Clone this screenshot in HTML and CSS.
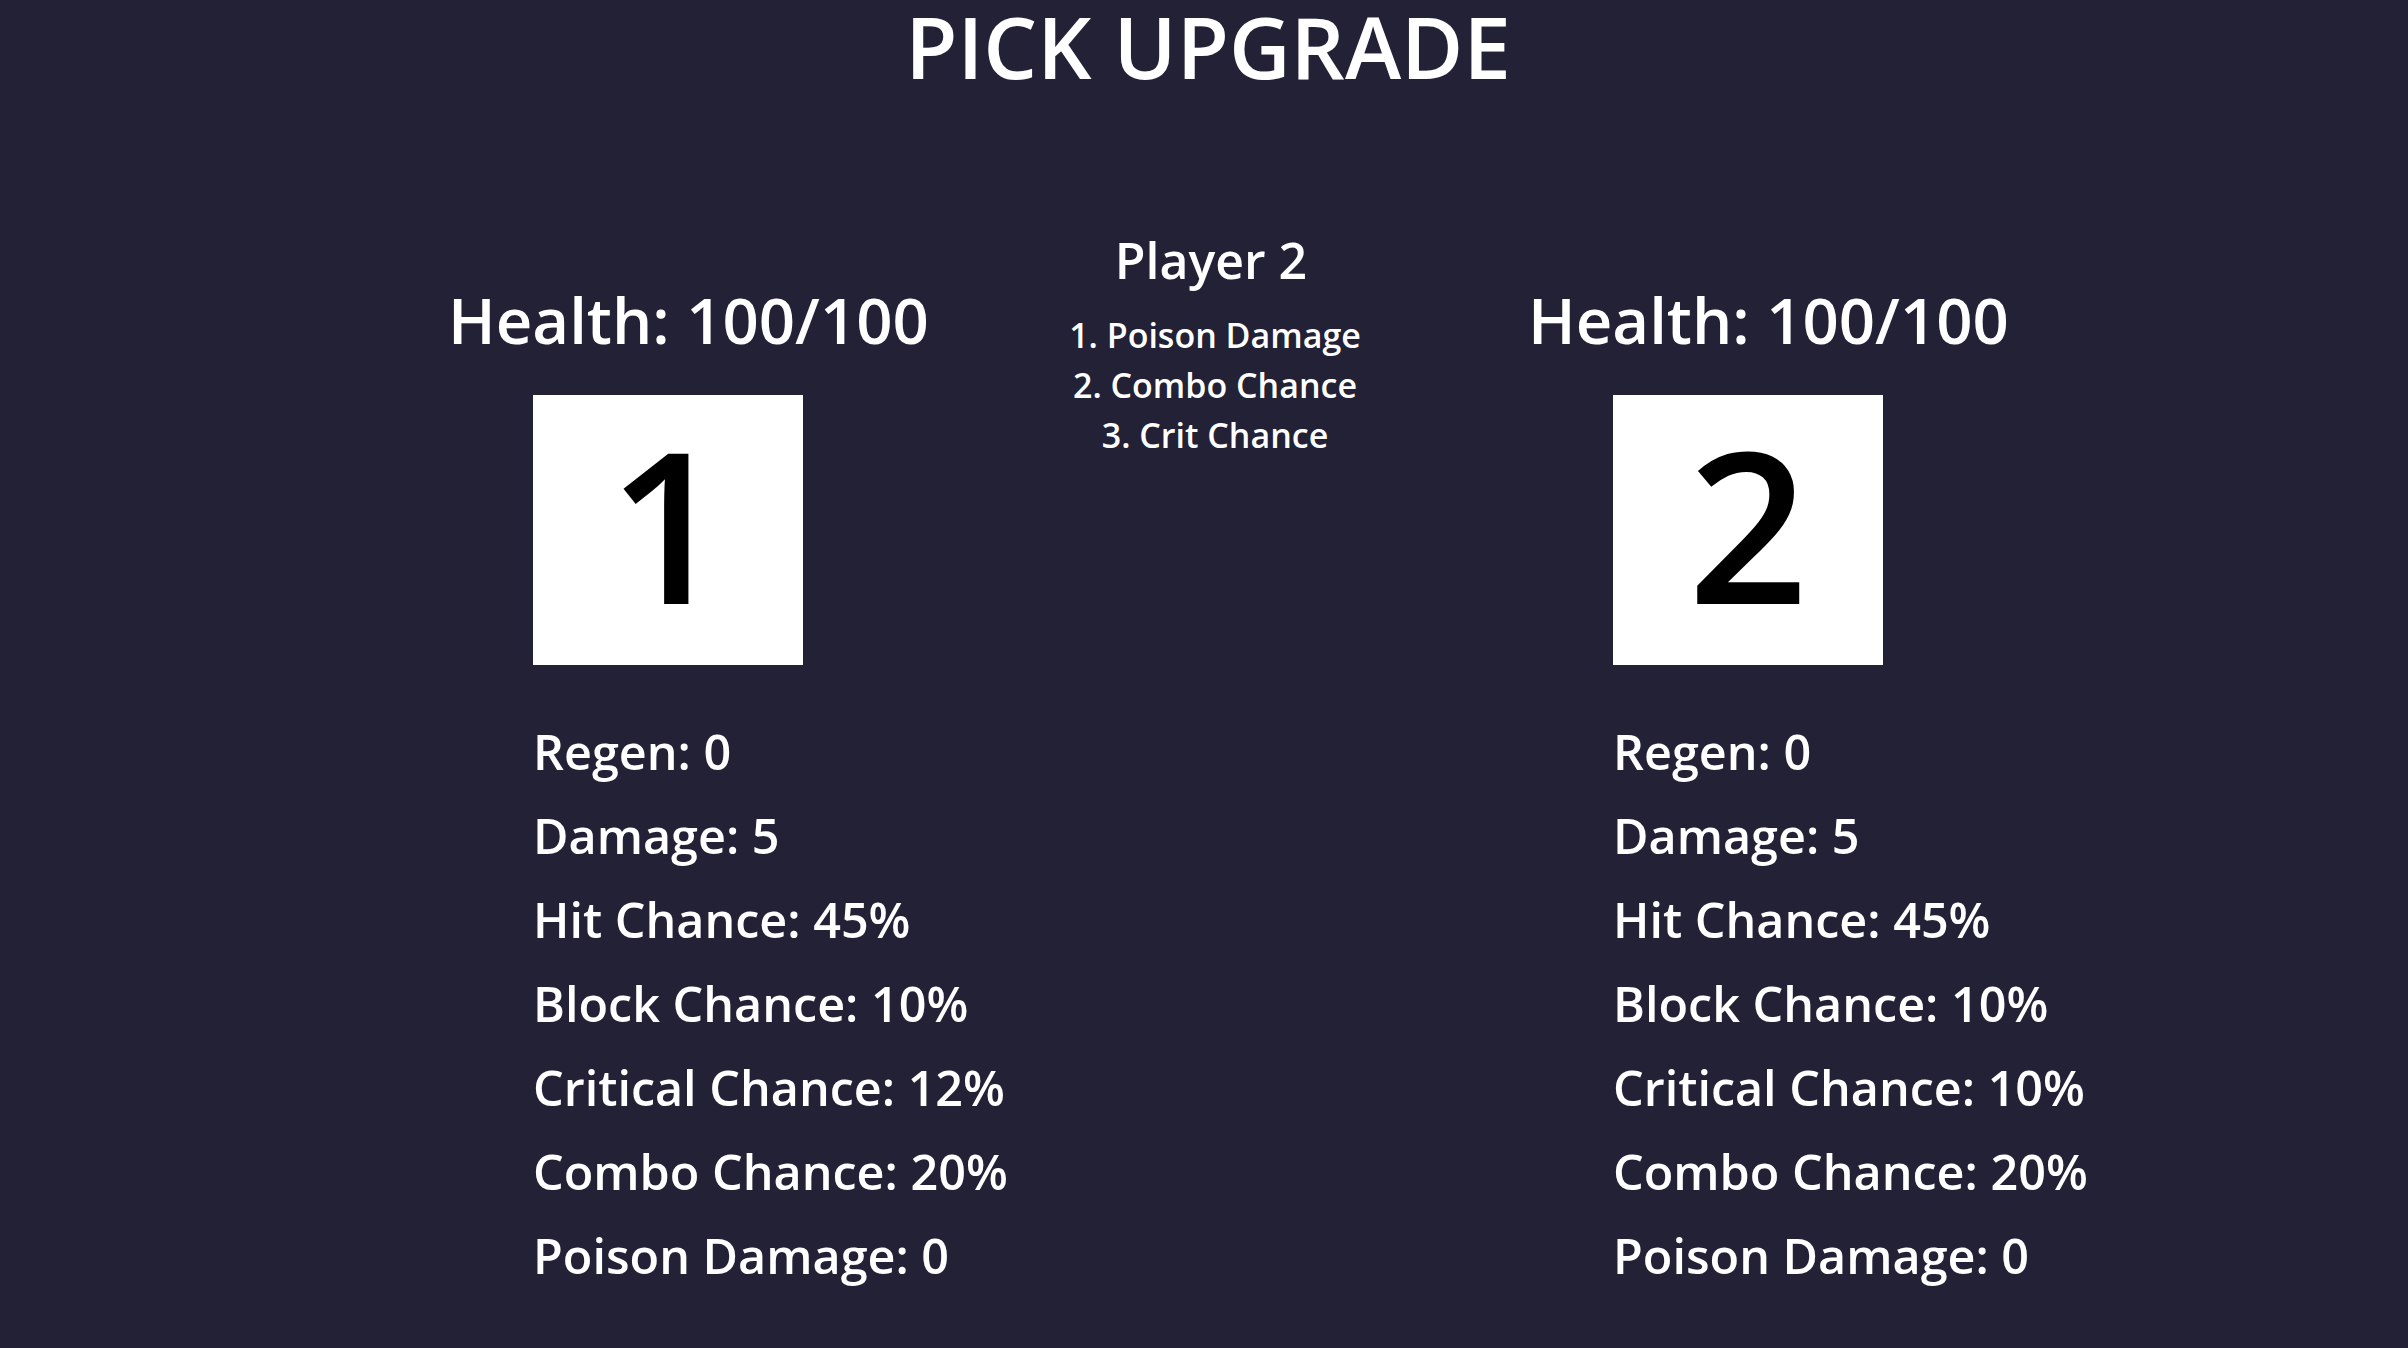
FILE: index.html
```html
<!DOCTYPE html>
<html lang="en">
<head>
<meta charset="utf-8">
<title>Pick Upgrade</title>
<link rel="stylesheet" href="styles.css">
</head>
<body>
<h1 class="title">PICK UPGRADE</h1>
<main class="arena">
  <section class="player">
    <div class="health">Health: 100/100</div>
    <div class="player-body">
      <div class="card">1</div>
      <ul class="stats">
        <li>Regen: 0</li>
        <li>Damage: 5</li>
        <li>Hit Chance: 45%</li>
        <li>Block Chance: 10%</li>
        <li>Critical Chance: 12%</li>
        <li>Combo Chance: 20%</li>
        <li>Poison Damage: 0</li>
      </ul>
    </div>
  </section>
  <section class="turn">
    <div class="turn-name">Player 2</div>
    <ol class="choices">
      <li>1. Poison Damage</li>
      <li>2. Combo Chance</li>
      <li>3. Crit Chance</li>
    </ol>
  </section>
  <section class="player">
    <div class="health">Health: 100/100</div>
    <div class="player-body">
      <div class="card">2</div>
      <ul class="stats">
        <li>Regen: 0</li>
        <li>Damage: 5</li>
        <li>Hit Chance: 45%</li>
        <li>Block Chance: 10%</li>
        <li>Critical Chance: 10%</li>
        <li>Combo Chance: 20%</li>
        <li>Poison Damage: 0</li>
      </ul>
    </div>
  </section>
</main>
</body>
</html>
```

FILE: styles.css
```css
html, body {
  margin: 0;
  padding: 0;
}
body {
  width: 2408px;
  height: 1348px;
  overflow: hidden;
  background: #222136;
  color: #ffffff;
  font-family: "Open Sans", "Noto Sans", sans-serif;
  font-weight: 600;
}
.title {
  margin: 0;
  padding: 1px 0 3px 8px;
  font-size: 85px;
  line-height: 90px;
  font-weight: 600;
  text-align: center;
}
.arena {
  display: flex;
  align-items: flex-start;
  padding-left: 453px;
}
.player {
  width: 470px;
  flex: none;
  display: flex;
  flex-direction: column;
  align-items: flex-start;
  padding-top: 186px;
}
.health {
  margin-left: -5px;
  font-size: 63.5px;
  line-height: 80px;
  white-space: nowrap;
}
.player-body {
  padding-left: 80px;
  display: flex;
  flex-direction: column;
  align-items: flex-start;
}
.card {
  margin-top: 35px;
  width: 270px;
  height: 270px;
  background: #ffffff;
  color: #000000;
  font-size: 211px;
  line-height: 254px;
  text-align: center;
}
.stats {
  list-style: none;
  margin: 44px 0 0;
  padding: 0;
  font-size: 48.5px;
  line-height: 84px;
  white-space: nowrap;
}
.turn {
  width: 400px;
  flex: none;
  margin: 0 122px 0 88px;
  padding-top: 132px;
  text-align: center;
}
.turn-name {
  font-size: 50px;
  line-height: 68px;
}
.choices {
  list-style: none;
  margin: 16px 0 0;
  padding: 0 0 0 8px;
  font-size: 34px;
  line-height: 50px;
}
```
